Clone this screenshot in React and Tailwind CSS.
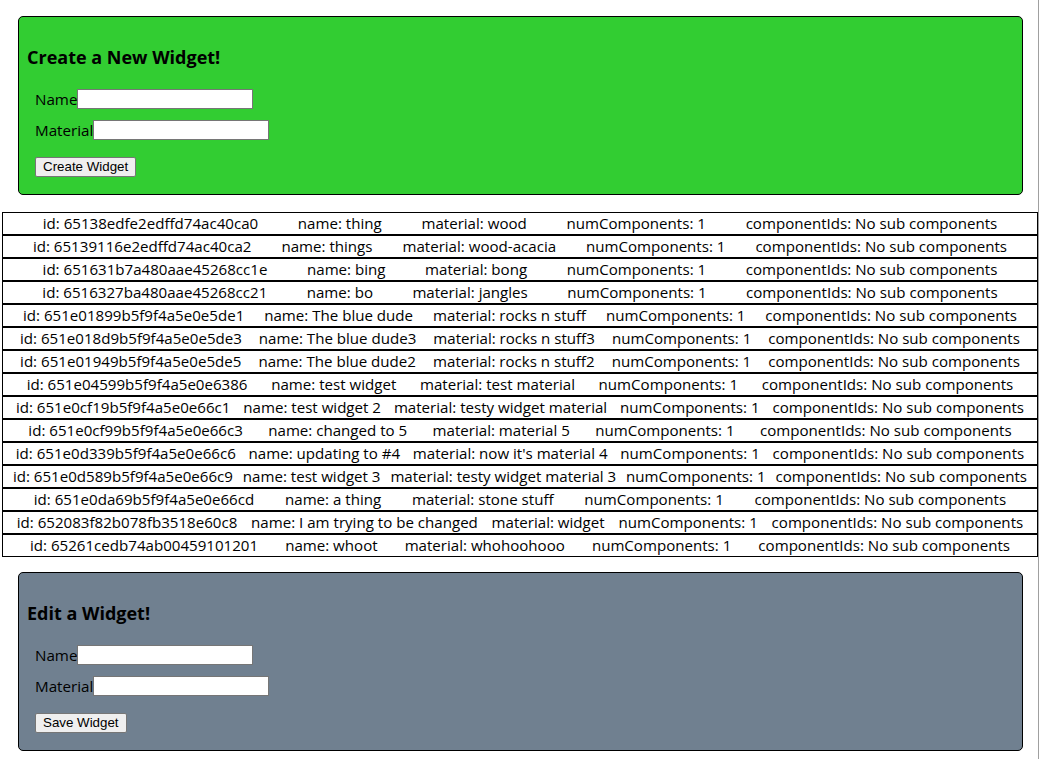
import React from 'react';

const widgets = [
  ['65138edfe2edffd74ac40ca0', 'thing', 'wood'],
  ['65139116e2edffd74ac40ca2', 'things', 'wood-acacia'],
  ['651631b7a480aae45268cc1e', 'bing', 'bong'],
  ['6516327ba480aae45268cc21', 'bo', 'jangles'],
  ['651e01899b5f9f4a5e0e5de1', 'The blue dude', 'rocks n stuff'],
  ['651e018d9b5f9f4a5e0e5de3', 'The blue dude3', 'rocks n stuff3'],
  ['651e01949b5f9f4a5e0e5de5', 'The blue dude2', 'rocks n stuff2'],
  ['651e04599b5f9f4a5e0e6386', 'test widget', 'test material'],
  ['651e0cf19b5f9f4a5e0e66c1', 'test widget 2', 'testy widget material'],
  ['651e0cf99b5f9f4a5e0e66c3', 'changed to 5', 'material 5'],
  ['651e0d339b5f9f4a5e0e66c6', 'updating to #4', "now it's material 4"],
  ['651e0d589b5f9f4a5e0e66c9', 'test widget 3', 'testy widget material 3'],
  ['651e0da69b5f9f4a5e0e66cd', 'a thing', 'stone stuff'],
  ['652083f82b078fb3518e60c8', 'I am trying to be changed', 'widget'],
  ['65261cedb74ab00459101201', 'whoot', 'whohoohooo'],
];

function WidgetForm({ title, button, bg }) {
  return (
    <div className={`ml-[18px] mr-[15px] border border-black rounded-[5px] ${bg} pl-[8px] pt-[28px] pb-[17px]`}>
      <h3 className="text-[18px] leading-[25px] font-bold">{title}</h3>
      <div className="pl-[8px] mt-[19px] text-[15.2px]">
        <div className="flex items-center h-[20px]">
          <label>Name</label>
          <input className="w-[176px] h-[20px] bg-white border border-[#767676]" />
        </div>
        <div className="flex items-center h-[20px] mt-[11px]">
          <label>Material</label>
          <input className="w-[176px] h-[20px] bg-white border border-[#767676]" />
        </div>
        <button className="mt-[17px] h-[20px] px-[7px] bg-[#efefef] border border-[#767676] rounded-[2px] text-[13.33px] leading-[16px] font-['Liberation_Sans',Arial,sans-serif] text-black">
          {button}
        </button>
      </div>
    </div>
  );
}

export default function App() {
  return (
    <div className="w-[1039px] min-h-[759px] bg-white border-r border-[#a0a0a0] text-black text-[15.1px] font-['Open_Sans','Noto_Sans',sans-serif] pt-[16px]">
      <WidgetForm title="Create a New Widget!" button="Create Widget" bg="bg-[#32cd32]" />

      <div className="mt-[17px] ml-[2px] w-[1036px]">
        {widgets.map(([id, name, material]) => (
          <div key={id} className="flex justify-evenly border border-black leading-[21px] whitespace-nowrap">
            <span>id: {id}</span>
            <span>name: {name}</span>
            <span>material: {material}</span>
            <span>numComponents: 1</span>
            <span>componentIds: No sub components</span>
          </div>
        ))}
      </div>

      <div className="mt-[15px]">
        <WidgetForm title="Edit a Widget!" button="Save Widget" bg="bg-[#708090]" />
      </div>
    </div>
  );
}
